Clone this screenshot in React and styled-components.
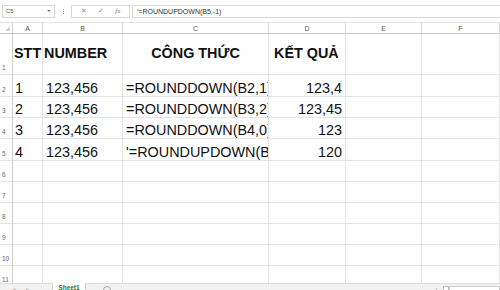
import React from "react"
import styled, { createGlobalStyle } from "styled-components"

const GlobalStyle = createGlobalStyle`
  * { box-sizing: border-box; }
  html, body { margin: 0; padding: 0; background: #fff; }
  body { font-family: "Liberation Sans", Arial, sans-serif; }
`

const Window = styled.div`
  width: 500px;
  height: 290px;
  overflow: hidden;
  display: flex;
  flex-direction: column;
  background: #fff;
`

const FormulaBar = styled.div`
  height: 22px;
  flex: none;
  display: flex;
  align-items: center;
  padding: 0 0 0 2px;
`

const NameBox = styled.div`
  width: 53px;
  height: 13px;
  border: 1px solid #d6d6d6;
  display: flex;
  align-items: center;
  justify-content: space-between;
  padding: 0 3px;
  font-size: 6px;
  color: #555;
`

const Caret = styled.span`
  width: 0;
  height: 0;
  border-left: 2px solid transparent;
  border-right: 2px solid transparent;
  border-top: 2px solid #777;
`

const Dots = styled.div`
  width: 16px;
  display: flex;
  flex-direction: column;
  align-items: center;
  gap: 1px;
  span {
    width: 1px;
    height: 1px;
    background: #999;
  }
`

const ButtonBox = styled.div`
  width: 59px;
  height: 13px;
  border: 1px solid #d6d6d6;
  display: flex;
  align-items: center;
  justify-content: space-around;
  padding: 0 3px;
  color: #888;
  font-size: 7px;
`

const Fx = styled.span`
  font-family: "Liberation Serif", serif;
  font-style: italic;
  font-size: 7px;
  color: #777;
`

const FormulaInput = styled.div`
  flex: 1;
  height: 13px;
  margin-left: 2px;
  border: 1px solid #d6d6d6;
  border-right: none;
  display: flex;
  align-items: center;
  padding-left: 4px;
  font-size: 7px;
  color: #333;
`

const Sheet = styled.div`
  height: 261px;
  flex: none;
  overflow: hidden;
  display: grid;
  grid-template-columns: 13px 30px 80px 146px 77px 76px 1fr;
  grid-template-rows: 11px 41px 22px 21px 21px 22px repeat(6, 21px);
  border-top: 1px solid #e2e2e2;
`

const ColHead = styled.div`
  border-right: 1px solid #dadada;
  border-bottom: 1px solid #c9c9c9;
  display: flex;
  align-items: center;
  justify-content: center;
  font-size: 7px;
  color: #555;
`

const Corner = styled(ColHead)`
  justify-content: flex-end;
  align-items: flex-end;
  padding: 0 2px 2px 0;
  border-right-color: #c9c9c9;
  span {
    width: 0;
    height: 0;
    border-left: 5px solid transparent;
    border-bottom: 5px solid #d0d0d0;
  }
`

const RowHead = styled.div`
  border-right: 1px solid #cfcfcf;
  border-bottom: 1px solid #e4e4e4;
  display: flex;
  align-items: flex-end;
  padding: 0 0 3px 2px;
  font-size: 6.5px;
  color: #666;
`

const Cell = styled.div`
  border-right: 1px solid #e4e4e4;
  border-bottom: 1px solid #e4e4e4;
  display: flex;
  align-items: ${(p) => (p.$top ? "flex-start" : "flex-end")};
  justify-content: ${(p) =>
    p.$align === "right" ? "flex-end" : p.$align === "center" ? "center" : "flex-start"};
  padding: ${(p) => (p.$top ? "11px" : "0")} ${(p) => p.$pr || 0}px 0 ${(p) => p.$pl || 0}px;
  overflow: hidden;
  white-space: nowrap;
  font-size: 14.4px;
  font-weight: ${(p) => (p.$bold ? 700 : 400)};
  color: #111;
`

const TabBar = styled.div`
  height: 20px;
  flex: none;
  background: #f1f1f1;
  border-top: 1px solid #dcdcdc;
  display: flex;
  align-items: flex-start;
`

const NavArrows = styled.div`
  width: 52px;
  display: flex;
  gap: 10px;
  padding: 2px 0 0 11px;
  color: #bbb;
  font-size: 6px;
`

const SheetTab = styled.div`
  width: 34px;
  height: 20px;
  margin-top: -1px;
  background: #fff;
  border-left: 1px solid #cfcfcf;
  border-right: 1px solid #cfcfcf;
  display: flex;
  justify-content: center;
  padding-top: 1px;
  font-size: 6.5px;
  font-weight: 700;
  color: #217346;
`

const AddSheet = styled.div`
  width: 8px;
  height: 8px;
  margin: 2px 0 0 17px;
  border: 1px solid #aaa;
  border-radius: 50%;
`

const ScrollArea = styled.div`
  margin-left: auto;
  display: flex;
  align-items: flex-start;
  gap: 6px;
  padding-top: 2px;
`

const ScrollDot = styled.span`
  width: 1px;
  height: 1px;
  margin-top: 2px;
  background: #aaa;
`

const ScrollBtn = styled.span`
  width: 6px;
  height: 7px;
  border: 1px solid #bdbdbd;
  background: #fff;
`

const ScrollTrack = styled.span`
  width: 51px;
  height: 7px;
  margin-left: -6px;
  border: 1px solid #cfcfcf;
  background: #fff;
`

const columns = ["A", "B", "C", "D", "E", "F"]

const rows = [
  { n: 1, header: true, cells: ["STT", "NUMBER", "CÔNG THỨC", "KẾT QUẢ"] },
  { n: 2, cells: ["1", "123,456", "=ROUNDDOWN(B2,1)", "123,4"] },
  { n: 3, cells: ["2", "123,456", "=ROUNDDOWN(B3,2)", "123,45"] },
  { n: 4, cells: ["3", "123,456", "=ROUNDDOWN(B4,0)", "123"] },
  { n: 5, cells: ["4", "123,456", "'=ROUNDUPDOWN(B5,-1)", "120"] },
  { n: 6, cells: [] },
  { n: 7, cells: [] },
  { n: 8, cells: [] },
  { n: 9, cells: [] },
  { n: 10, cells: [] },
  { n: 11, cells: [] },
]

const cellProps = (row, col) => {
  if (row.header) {
    if (col === 2) return { $top: true, $bold: true, $align: "center" }
    if (col === 3) return { $top: true, $bold: true, $pl: 5 }
    return { $top: true, $bold: true, $pl: 1 }
  }
  if (col === 3) return { $align: "right", $pr: 3 }
  if (col === 0) return { $pl: 2 }
  return { $pl: 3 }
}

const App = () => {
  return (
    <>
      <GlobalStyle />
      <Window>
        <FormulaBar>
          <NameBox>
            C5
            <Caret />
          </NameBox>
          <Dots>
            <span />
            <span />
            <span />
          </Dots>
          <ButtonBox>
            <span>✕</span>
            <span>✓</span>
            <Fx>fx</Fx>
          </ButtonBox>
          <FormulaInput>'=ROUNDUPDOWN(B5,-1)</FormulaInput>
        </FormulaBar>

        <Sheet>
          <Corner>
            <span />
          </Corner>
          {columns.map((c) => (
            <ColHead key={c}>{c}</ColHead>
          ))}

          {rows.map((row) => (
            <React.Fragment key={row.n}>
              <RowHead>{row.n}</RowHead>
              {columns.map((c, i) => (
                <Cell key={c} {...cellProps(row, i)}>
                  {row.cells[i] || ""}
                </Cell>
              ))}
            </React.Fragment>
          ))}
        </Sheet>

        <TabBar>
          <NavArrows>
            <span>◀</span>
            <span>▶</span>
          </NavArrows>
          <SheetTab>Sheet1</SheetTab>
          <AddSheet />
          <ScrollArea>
            <ScrollDot />
            <ScrollBtn />
            <ScrollTrack />
          </ScrollArea>
        </TabBar>
      </Window>
    </>
  )
}

export default App
